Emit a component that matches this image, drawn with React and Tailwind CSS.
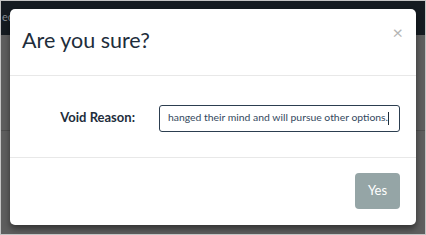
import React from 'react';

const App = () => {
  return (
    <div className="relative w-[426px] h-[235px] overflow-hidden border border-[#c4c4c4] bg-[#5e5e5e] font-['Lato','Liberation_Sans',sans-serif]">
      {/* page behind the overlay */}
      <div className="h-[34px] bg-[#151b21] px-[1px] pt-[2px]">
        <span className="text-[11px] leading-none text-[#8a8f94]">ec</span>
      </div>
      <div className="h-[96px] border-b border-[#4f4f4f]" />

      {/* Modal */}
      <div className="absolute left-[9px] top-[8px] w-[406px] h-[216px] bg-white rounded-[5px] shadow-[0_4px_6px_rgba(0,0,0,0.45)] flex flex-col">
        <div className="relative h-[67px] border-b border-[#e8e8e8] flex items-center pl-[12px]">
          <h1 className="text-[21.5px] leading-none text-[#1e2d3b] -mt-[3px]">Are you sure?</h1>
          <button className="absolute right-[13px] top-[14px] text-[#b5b5b5] text-[18px] leading-none">×</button>
        </div>
        <div className="h-[82px] border-b border-[#e8e8e8] flex items-center pt-[3px]">
          <label className="w-[125px] text-right text-[13px] font-bold text-[#1e2d3b]">Void Reason:</label>
          <div className="ml-[24px] w-[241px] h-[27px] border border-[#2c3e50] rounded-[3px] flex items-center pl-[8px] overflow-hidden">
            <span className="text-[10.4px] text-[#34495e] whitespace-nowrap">hanged their mind and will pursue other options.</span>
            <span className="w-px h-[13px] bg-[#1e2d3b]" />
          </div>
        </div>
        <div className="flex-1 flex items-center justify-end pr-[16px] pb-[2px]">
          <button className="w-[45px] h-[36px] rounded-[4px] bg-[#95a5a6] text-white text-[13px]">Yes</button>
        </div>
      </div>
    </div>
  );
};

export default App;
